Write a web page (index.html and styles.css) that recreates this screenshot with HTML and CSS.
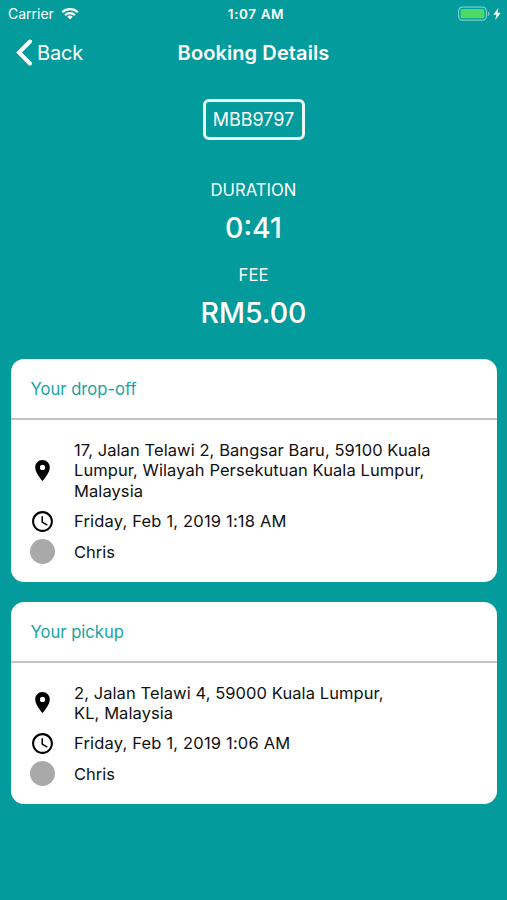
FILE: index.html
```
<!DOCTYPE html>
<html lang="en">
<head>
  <meta charset="UTF-8" />
  <meta name="viewport" content="width=device-width, initial-scale=1.0" />
  <title>Booking Details</title>
  <link rel="stylesheet" href="styles.css">
</head>
<body>
  <div class="status-bar">
    <div class="carrier">
      <span class="carrier-name">Carrier</span>
      <svg class="wifi" viewBox="0 0 18 13" width="18" height="13">
        <path d="M1.2 5.2a11.2 11.2 0 0 1 15.6 0M4.1 8.1a7.1 7.1 0 0 1 9.8 0" fill="none" stroke="#fff" stroke-width="2.2" />
        <path d="M9 12.4L6.3 9.7a3.9 3.9 0 0 1 5.4 0z" fill="#fff" />
      </svg>
    </div>
    <span class="time">1:07 AM</span>
    <div class="power">
      <svg viewBox="0 0 44 16" width="44" height="16">
        <rect x=".7" y="1.2" width="27.6" height="13" rx="3.6" fill="none" stroke="#7dcbca" stroke-width="1.2" />
        <rect x="2.6" y="3.1" width="23.8" height="9.2" rx="1.6" fill="#4cd964" />
        <path d="M29.8 5.4q1.8.5 1.8 2.3t-1.8 2.3z" fill="#7dcbca" />
        <path d="M40.5 1.8L35.3 8.7h3.1l-1.2 5.2 5.6-7.1h-3.3z" fill="#fff" />
      </svg>
    </div>
  </div>

  <div class="nav">
    <a class="back">
      <svg viewBox="0 0 17 27" width="17" height="27">
        <path d="M14 2.5L3 13.5l11 11" fill="none" stroke="#fff" stroke-width="4" stroke-linecap="round" />
      </svg>
      <span class="back-label">Back</span>
    </a>
    <h1>Booking Details</h1>
  </div>

  <div class="summary">
    <div class="plate">MBB9797</div>
    <div class="label">DURATION</div>
    <div class="value duration">0:41</div>
    <div class="label">FEE</div>
    <div class="value fee">RM5.00</div>
  </div>

  <div class="cards">
    <div class="card">
      <h2>Your drop-off</h2>
      <div class="details">
        <div class="row">
          <svg class="icon" viewBox="0 0 24 24">
            <path d="M12 2C8.13 2 5 5.13 5 9c0 5.25 7 13 7 13s7-7.75 7-13c0-3.87-3.13-7-7-7zm0 9.5a2.5 2.5 0 0 1 0-5 2.5 2.5 0 0 1 0 5z" />
          </svg>
          <p class="address">17, Jalan Telawi 2, Bangsar Baru, 59100 Kuala<br>Lumpur, Wilayah Persekutuan Kuala Lumpur,<br>Malaysia</p>
        </div>
        <div class="row">
          <svg class="icon" viewBox="0 0 24 24">
            <path d="M11.99 2C6.47 2 2 6.48 2 12s4.47 10 9.99 10C17.52 22 22 17.52 22 12S17.52 2 11.99 2zM12 20c-4.42 0-8-3.58-8-8s3.58-8 8-8 8 3.58 8 8-3.58 8-8 8zm.5-13H11v6l5.25 3.15.75-1.23-4.5-2.67z" />
          </svg>
          <p class="date">Friday, Feb 1, 2019 1:18 AM</p>
        </div>
        <div class="row">
          <span class="avatar"></span>
          <p class="name">Chris</p>
        </div>
      </div>
    </div>

    <div class="card">
      <h2>Your pickup</h2>
      <div class="details">
        <div class="row">
          <svg class="icon" viewBox="0 0 24 24">
            <path d="M12 2C8.13 2 5 5.13 5 9c0 5.25 7 13 7 13s7-7.75 7-13c0-3.87-3.13-7-7-7zm0 9.5a2.5 2.5 0 0 1 0-5 2.5 2.5 0 0 1 0 5z" />
          </svg>
          <p class="address">2, Jalan Telawi 4, 59000 Kuala Lumpur,<br>KL, Malaysia</p>
        </div>
        <div class="row">
          <svg class="icon" viewBox="0 0 24 24">
            <path d="M11.99 2C6.47 2 2 6.48 2 12s4.47 10 9.99 10C17.52 22 22 17.52 22 12S17.52 2 11.99 2zM12 20c-4.42 0-8-3.58-8-8s3.58-8 8-8 8 3.58 8 8-3.58 8-8 8zm.5-13H11v6l5.25 3.15.75-1.23-4.5-2.67z" />
          </svg>
          <p class="date">Friday, Feb 1, 2019 1:06 AM</p>
        </div>
        <div class="row">
          <span class="avatar"></span>
          <p class="name">Chris</p>
        </div>
      </div>
    </div>
  </div>
</body>
</html>
```
FILE: styles.css
```
* {
  box-sizing: border-box;
}
body {
  font-family: Inter, "Liberation Sans", sans-serif;
  margin: 0;
  min-height: 100vh;
  background: #039b9b;
  color: #fff;
}
h1, h2, p {
  margin: 0;
}
.status-bar {
  display: grid;
  grid-template-columns: 1fr auto 1fr;
  align-items: center;
  height: 27px;
  padding: 0 5px 0 8px;
  font-size: 14px;
}
.carrier {
  display: flex;
  align-items: center;
  gap: 7px;
}
.time {
  padding-left: 2px;
  font-weight: 600;
  font-size: 13.5px;
  letter-spacing: 0.6px;
}
.power {
  display: flex;
  justify-content: flex-end;
}
.nav {
  display: grid;
  grid-template-columns: 1fr auto 1fr;
  align-items: center;
  height: 51px;
  padding: 0 16px;
}
.back {
  display: flex;
  align-items: center;
  gap: 4px;
  font-size: 20px;
  letter-spacing: -0.2px;
}
h1 {
  font-size: 20px;
  font-weight: 600;
  letter-spacing: 0.1px;
}
.summary {
  display: flex;
  flex-direction: column;
  align-items: center;
  padding-top: 21px;
}
.plate {
  width: 102px;
  height: 41px;
  margin-bottom: 39px;
  border: 3px solid #e9f8f8;
  border-radius: 6px;
  font-size: 18px;
  line-height: 36px;
  text-align: center;
  white-space: nowrap;
}
.label {
  font-size: 16.7px;
  line-height: 22px;
}
.value {
  height: 63px;
  padding-top: 10px;
  font-size: 28.5px;
  font-weight: 500;
  line-height: 34px;
}
.cards {
  display: flex;
  flex-direction: column;
  gap: 19.5px;
  padding: 10px 10px 0 10.5px;
}
.card {
  background: #fff;
  border-radius: 13px;
  color: #111;
}
h2 {
  height: 61px;
  padding-left: 20px;
  border-bottom: 2px solid #c3c3c3;
  color: #1aa5a3;
  font-size: 16.6px;
  font-weight: 400;
  line-height: 61px;
}
.details {
  display: flex;
  flex-direction: column;
  gap: 10px;
  padding: 20px 20px 20px 19.5px;
}
.row {
  display: flex;
  align-items: center;
  gap: 19px;
  font-size: 16.5px;
  line-height: 20.4px;
}
.address {
  letter-spacing: 0.08px;
}
.date {
  letter-spacing: 0.18px;
}
.icon,
.avatar {
  flex: none;
  width: 25px;
  height: 25px;
  margin: -3px 0;
}
.icon {
  fill: #000;
}
.avatar {
  background: #a9a9a9;
  border-radius: 50%;
}
```
